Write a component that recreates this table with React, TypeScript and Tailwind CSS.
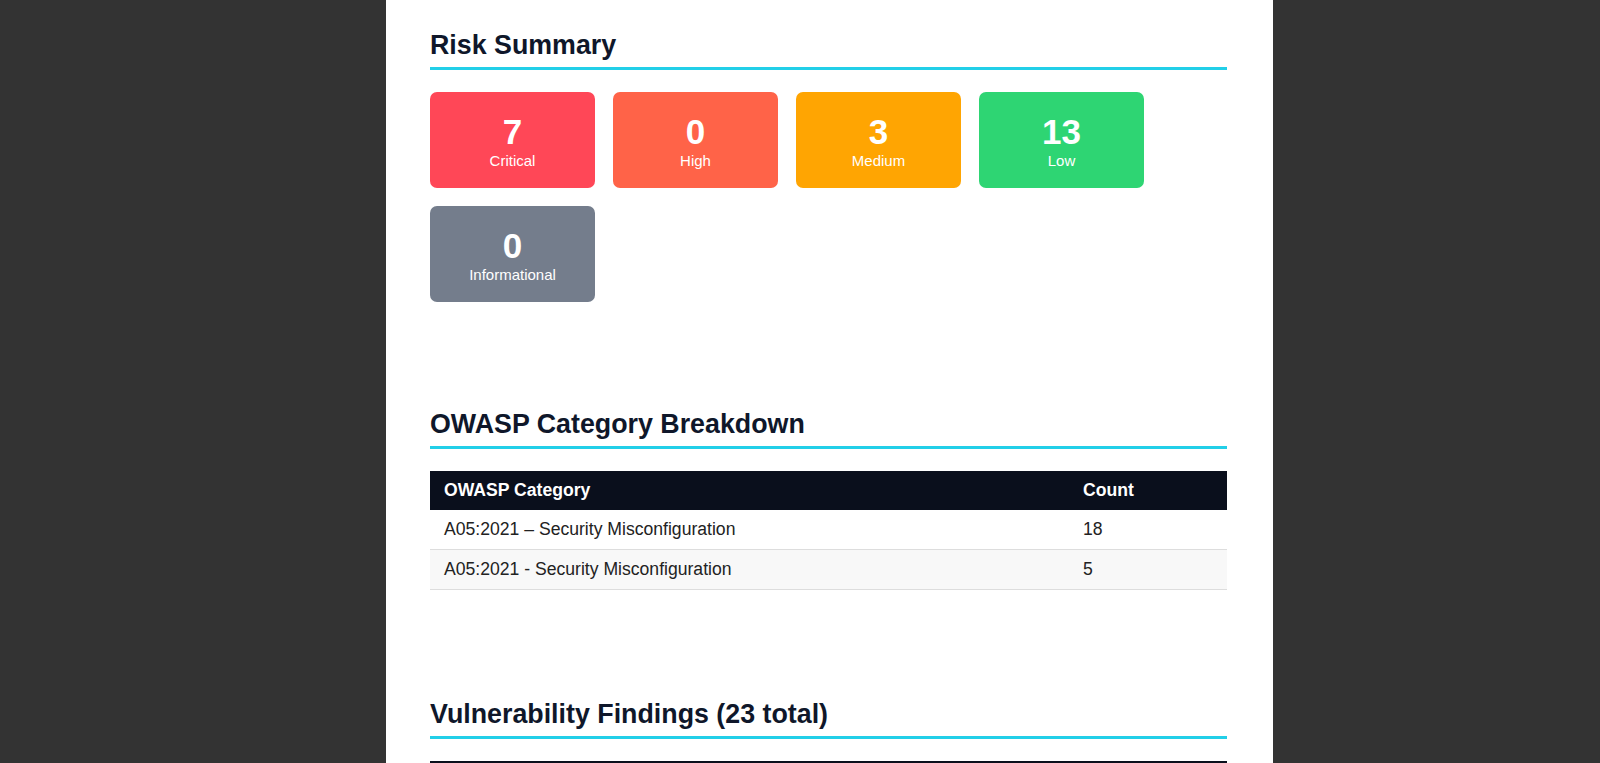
import React from "react";

const severities = [
  { count: 7, label: "Critical", color: "bg-[#ff4757]" },
  { count: 0, label: "High", color: "bg-[#ff6348]" },
  { count: 3, label: "Medium", color: "bg-[#ffa502]" },
  { count: 13, label: "Low", color: "bg-[#2ed573]" },
  { count: 0, label: "Informational", color: "bg-[#747d8c]" },
];

const owaspRows = [
  { category: "A05:2021 – Security Misconfiguration", count: 18 },
  { category: "A05:2021 - Security Misconfiguration", count: 5 },
];

function SectionHeading({ children }: { children: React.ReactNode }) {
  return (
    <h2 className="text-[26.8px] font-bold leading-[31px] text-[#0f172a] pb-[6px] border-b-[3px] border-[#22cfe8]">
      {children}
    </h2>
  );
}

function SeverityCard({ count, label, color }: { count: number; label: string; color: string }) {
  return (
    <div className={`${color} h-[96px] rounded-[7px] flex flex-col items-center pt-[22px] text-white`}>
      <div className="text-[35px] font-bold leading-[35px]">{count}</div>
      <div className="mt-[3px] text-[15px] leading-[17px]">{label}</div>
    </div>
  );
}

export default function App() {
  return (
    <div
      className="h-[763px] overflow-hidden bg-[#333333] pl-[386px] flex"
      style={{ fontFamily: '"Liberation Sans", Arial, sans-serif' }}
    >
      <div className="w-[887px] bg-white pl-[44px] pr-[46px] pt-[30px]">
        {/* risk summary */}
        <SectionHeading>Risk Summary</SectionHeading>
        <div className="mt-[22px] grid grid-cols-[repeat(4,165px)] gap-[18px]">
          {severities.map((s) => (
            <SeverityCard key={s.label} {...s} />
          ))}
        </div>

        {/* owasp breakdown */}
        <div className="mt-[107px]">
          <SectionHeading>OWASP Category Breakdown</SectionHeading>
          <div className="mt-[22px] text-[17.6px]">
            <div className="grid grid-cols-[1fr_158px] h-[39px] items-center bg-[#0a0f1c] text-white font-bold">
              <div className="px-[14px]">OWASP Category</div>
              <div className="px-[14px]">Count</div>
            </div>
            {owaspRows.map((row, i) => (
              <div
                key={i}
                className={`grid grid-cols-[1fr_158px] h-[40px] items-center border-b border-[#dddddd] text-[#222222] ${
                  i % 2 === 1 ? "bg-[#f8f8f8]" : "bg-white"
                }`}
              >
                <div className="px-[14px]">{row.category}</div>
                <div className="px-[14px]">{row.count}</div>
              </div>
            ))}
          </div>
        </div>

        {/* findings */}
        <div className="mt-[109px]">
          <SectionHeading>Vulnerability Findings (23 total)</SectionHeading>
          {/* findings table header, runs past the bottom of the view */}
          <div className="mt-[22px] h-[39px] bg-[#0a0f1c]" />
        </div>
      </div>
    </div>
  );
}
